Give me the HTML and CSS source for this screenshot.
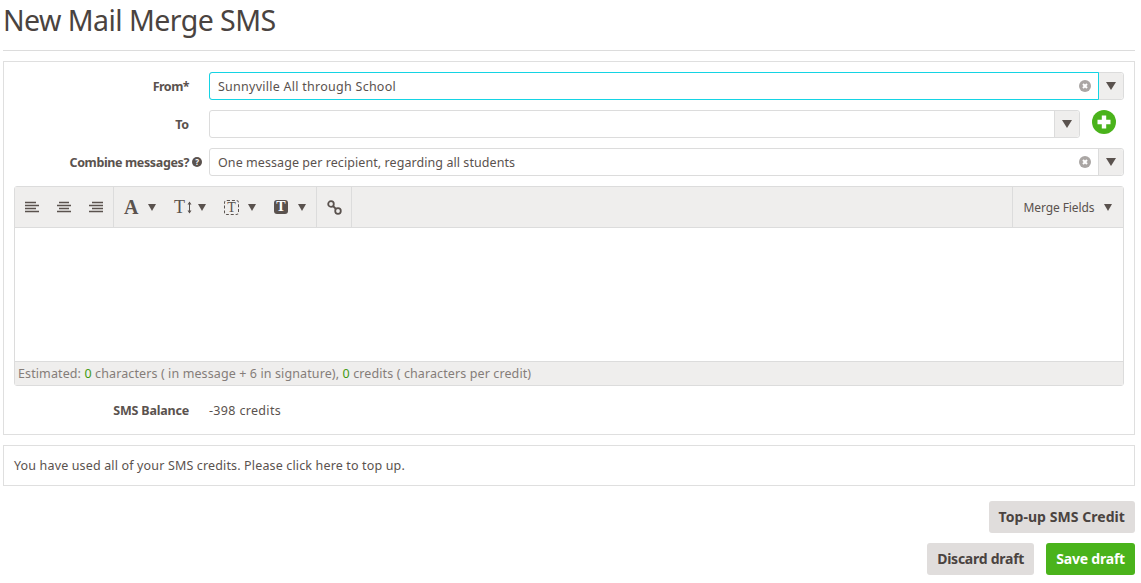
FILE: index.html
```html
<!DOCTYPE html>
<html lang="en">
<head>
<meta charset="utf-8">
<title>New Mail Merge SMS</title>
<link rel="stylesheet" href="styles.css">
</head>
<body>
<header class="page-head"><h1>New Mail Merge SMS</h1></header>
<section class="panel form">
  <div class="row">
    <label class="lbl lbl-from">From*</label>
    <div class="select focus">
      <span class="val val-from">Sunnyville All through School</span>
      <svg class="clear" viewBox="0 0 12 12"><circle cx="6" cy="6" r="6" fill="#aaa6a4"/><path d="M4 4l4 4M8 4l-4 4" stroke="#fff" stroke-width="2"/></svg>
      <span class="arrow"><i class="tri"></i></span>
    </div>
  </div>
  <div class="row">
    <label class="lbl">To</label>
    <div class="select short">
      <span class="val"></span>
      <span class="arrow"><i class="tri"></i></span>
    </div>
    <svg class="plus" viewBox="0 0 24 24"><circle cx="12" cy="12" r="12" fill="#4ab31b"/><path d="M12 5.500v13M5.500 12h13" stroke="#fff" stroke-width="4.400"/></svg>
  </div>
  <div class="row">
    <label class="lbl lbl-combine">Combine messages?<svg class="help" viewBox="0 0 10 10"><circle cx="5" cy="5" r="5" fill="#5a524e"/><text x="5" y="8" text-anchor="middle" class="help-q">?</text></svg></label>
    <div class="select">
      <span class="val">One message per recipient, regarding all students</span>
      <svg class="clear" viewBox="0 0 12 12"><circle cx="6" cy="6" r="6" fill="#aaa6a4"/><path d="M4 4l4 4M8 4l-4 4" stroke="#fff" stroke-width="2"/></svg>
      <span class="arrow"><i class="tri"></i></span>
    </div>
  </div>
  <div class="editor">
    <div class="toolbar">
      <div class="group aligns">
        <svg class="ic" viewBox="0 0 14 12"><path d="M0 1.500h11M0 4.500h14M0 7.500h11M0 10.500h14" stroke="#5a524e" stroke-width="1.500"/></svg>
        <svg class="ic" viewBox="0 0 14 12"><path d="M2 1.500h10M0 4.500h14M2 7.500h10M0 10.500h14" stroke="#5a524e" stroke-width="1.500"/></svg>
        <svg class="ic" viewBox="0 0 14 12"><path d="M3 1.500h11M0 4.500h14M3 7.500h11M0 10.500h14" stroke="#5a524e" stroke-width="1.500"/></svg>
      </div>
      <div class="group fonts">
        <span class="tool"><span class="glyph-a">A</span><i class="tri small"></i></span>
        <span class="tool"><span class="glyph-t">T<svg class="updown" viewBox="0 0 5 13"><path d="M2.500 1v11" stroke="#5a524e" stroke-width="1"/><path d="M0.500 3.500l2-3 2 3zM0.500 9.500l2 3 2-3z" fill="#5a524e"/></svg></span><i class="tri small"></i></span>
        <span class="tool"><span class="glyph-box">T</span><i class="tri small"></i></span>
        <span class="tool"><span class="glyph-fill">T</span><i class="tri small"></i></span>
      </div>
      <div class="group link">
        <svg class="ic-link" viewBox="0 0 15 15"><circle cx="4" cy="4" r="2.800" fill="none" stroke="#5a524e" stroke-width="1.800"/><circle cx="11" cy="11" r="2.800" fill="none" stroke="#5a524e" stroke-width="1.800"/><path d="M6 6l3 3" stroke="#5a524e" stroke-width="1.800"/></svg>
      </div>
      <div class="merge">Merge Fields<i class="tri small"></i></div>
    </div>
    <div class="body"></div>
    <div class="status">Estimated: <b>0</b> characters ( in message + 6 in signature), <b>0</b> credits ( characters per credit)</div>
  </div>
  <div class="row balance">
    <label class="lbl">SMS Balance</label>
    <span class="bal-val">-398 credits</span>
  </div>
</section>
<section class="panel notice">You have used all of your SMS credits. Please click here to top up.</section>
<div class="actions">
  <button class="btn topup" type="button">Top-up SMS Credit</button>
</div>
<div class="actions second">
  <button class="btn discard" type="button">Discard draft</button>
  <button class="btn green" type="button">Save draft</button>
</div>
</body>
</html>
```
FILE: styles.css
```css
* { box-sizing: border-box; }
html, body { margin: 0; padding: 0; }
body {
  padding: 0 6px 0 3px;
  font-family: "Noto Sans", "Open Sans", sans-serif;
  font-size: 13px;
  color: #5a524e;
  background: #fff;
  height: 583px;
  overflow: hidden;
}
.page-head { height: 51px; border-bottom: 1px solid #dcdcdc; }
h1 {
  margin: 0;
  padding-top: 1px;
  font-size: 28.500px;
  line-height: 38px;
  letter-spacing: -0.55px;
  font-weight: 400;
  color: #4a4340;
}
.panel { border: 1px solid #dfdfdf; }
.form { margin-top: 10px; height: 374px; padding: 10px 10px 0 10px; }
.row { display: flex; align-items: center; height: 28px; margin-bottom: 10px; }
.lbl {
  width: 175px;
  flex: none;
  margin-right: 20px;
  font-weight: 700;
  font-size: 12.500px;
  letter-spacing: -0.2px;
  display: flex;
  justify-content: flex-end;
  align-items: center;
}
.lbl-from { letter-spacing: -0.55px; }
.lbl-combine { letter-spacing: -0.37px; }
.help { width: 10px; height: 10px; margin-left: 3px; margin-right: -13px; }
.help-q { font-size: 8px; font-weight: 700; fill: #fff; font-family: "Noto Sans", sans-serif; }
.select {
  width: 915px;
  flex: none;
  height: 28px;
  display: flex;
  align-items: center;
  border: 1px solid #dcdcdc;
  border-radius: 3px;
  position: relative;
  background: #fff;
}
.select.short { width: 871px; }
.val {
  flex: 1;
  height: 100%;
  padding-left: 8px;
  line-height: 27px;
  font-size: 12.500px;
  letter-spacing: 0.07px;
  color: #5a524e;
}
.val-from { letter-spacing: 0.26px; }
.focus::before {
  content: "";
  position: absolute;
  left: -1px;
  top: -1px;
  bottom: -1px;
  right: 24px;
  border: 1px solid #14d4e4;
  border-radius: 3px 0 0 3px;
  pointer-events: none;
}
.clear { width: 12px; height: 12px; flex: none; margin-right: 7px; }
.arrow {
  width: 25px;
  height: 100%;
  flex: none;
  background: #efeeed;
  border-left: 1px solid #dcdcdc;
  display: flex;
  align-items: center;
  justify-content: center;
  border-radius: 0 3px 3px 0;
}
.tri {
  display: block;
  flex: none;
  width: 0;
  height: 0;
  border-left: 5.500px solid transparent;
  border-right: 5.500px solid transparent;
  border-top: 8px solid #5a524e;
}
.tri.small { border-left-width: 4.500px; border-right-width: 4.500px; border-top-width: 7px; }
.plus { width: 24px; height: 24px; flex: none; margin-left: 12px; align-self: flex-start; }
.editor {
  width: 1110px;
  height: 200px;
  border: 1px solid #dcdcdc;
  border-radius: 3px;
  display: flex;
  flex-direction: column;
}
.toolbar {
  height: 41px;
  flex: none;
  background: #efeeed;
  border-bottom: 1px solid #dcdcdc;
  display: flex;
  align-items: stretch;
}
.group { display: flex; align-items: center; flex: none; border-right: 1px solid #dcdcdc; }
.aligns { width: 99px; padding-left: 10px; gap: 18px; }
.ic { width: 14px; height: 12px; flex: none; }
.fonts { width: 203px; padding-left: 10px; }
.tool { display: flex; flex: none; align-items: center; justify-content: space-between; width: 50px; padding-right: 18px; }
.glyph-a { font-family: "Liberation Serif", serif; font-size: 20px; line-height: 1; font-weight: 700; }
.glyph-t { font-family: "Liberation Serif", serif; font-size: 18px; line-height: 1; display: flex; align-items: center; }
.updown { width: 5px; height: 13px; margin-left: 2px; }
.glyph-box {
  font-family: "Liberation Serif", serif;
  font-size: 14px;
  width: 15px;
  height: 15px;
  border: 1px dashed #5a524e;
  border-radius: 3px;
  line-height: 13px;
  text-align: center;
}
.glyph-fill {
  font-family: "Liberation Serif", serif;
  font-size: 14px;
  font-weight: 700;
  width: 14px;
  height: 14px;
  background: #5a524e;
  color: #fff;
  border-radius: 3px;
  line-height: 14px;
  text-align: center;
}
.link { width: 35px; justify-content: center; }
.ic-link { width: 15px; height: 15px; }
.merge {
  margin-left: auto;
  width: 111px;
  border-left: 1px solid #dcdcdc;
  display: flex;
  align-items: center;
  justify-content: center;
  font-size: 12px;
  letter-spacing: -0.1px;
  gap: 10px;
}
.body { flex: 1; background: #fff; }
.status {
  height: 24px;
  flex: none;
  background: #efeeed;
  border-top: 1px solid #dcdcdc;
  padding-left: 3px;
  line-height: 23px;
  font-size: 12.500px;
  letter-spacing: 0.11px;
  color: #857d79;
}
.status b { font-weight: 400; color: #3f9a12; }
.balance { margin: 10px 0 0 0; }
.bal-val { font-size: 12.500px; letter-spacing: 0.33px; }
.notice { margin-top: 10px; height: 41px; padding-left: 10px; line-height: 39px; font-size: 12.500px; letter-spacing: 0.15px; }
.actions { display: flex; justify-content: flex-end; gap: 12px; margin-top: 15px; }
.actions.second { margin-top: 10px; }
.btn {
  height: 32px;
  padding: 0 10px 2px;
  border: 0;
  border-radius: 3px;
  background: #e0dddc;
  color: #4a4340;
  font-family: "Noto Sans", sans-serif;
  font-weight: 700;
  font-size: 14px;
}
.btn.topup { letter-spacing: 0.06px; }
.btn.discard { letter-spacing: -0.25px; }
.btn.green { background: #4ab31b; color: #fff; letter-spacing: -0.2px; }
```
